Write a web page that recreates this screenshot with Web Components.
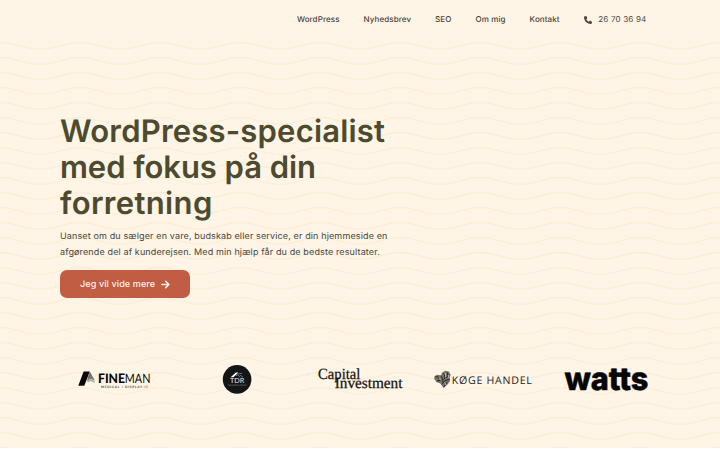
<!DOCTYPE html>
<html lang="da">
<head>
<meta charset="utf-8">
<title>WordPress-specialist</title>
<style>
    body{
        margin: 0;
        background-color: #fff;
        font-family: Inter, "Liberation Sans", sans-serif;
        color: #48443a;
        text-rendering: geometricPrecision;
    }
</style>
</head>
<body>
<landing-page>
    <site-nav slot="header">
        <nav-link>WordPress</nav-link>
        <nav-link>Nyhedsbrev</nav-link>
        <nav-link>SEO</nav-link>
        <nav-link>Om mig</nav-link>
        <nav-link>Kontakt</nav-link>
        <phone-link>26 70 36 94</phone-link>
    </site-nav>
    <hero-section>
        <span slot="title" style="letter-spacing:0.2px">WordPress-specialist</span>
        <span slot="title" style="letter-spacing:-0.05px">med fokus på din</span>
        <span slot="title" style="letter-spacing:0.35px">forretning</span>
        <span slot="text">Uanset om du sælger en vare, budskab eller service, er din hjemmeside en</span>
        <span slot="text">afgørende del af kunderejsen. Med min hjælp får du de bedste resultater.</span>
        <arrow-button slot="action">Jeg vil vide mere</arrow-button>
    </hero-section>
    <logo-row slot="footer"></logo-row>
</landing-page>

<script>
function attach(el, html){
    const template = document.createElement('template')
    template.innerHTML = html
    el.attachShadow({mode: 'open'}).appendChild(template.content.cloneNode(true))
}

class LandingPage extends HTMLElement {
    constructor(){
        super();
        attach(this, `
            <style>
                :host{
                    display: grid;
                    grid-template-rows: 38px 310px 100px;
                    width: 720px;
                    height: 448px;
                    position: relative;
                    overflow: hidden;
                    background-color: #fff5e7;
                }
                .waves{
                    position: absolute;
                    inset: 0;
                    z-index: 0;
                }
                ::slotted(*){
                    position: relative;
                }
            </style>
            <svg class="waves" width="720" height="448" fill="none" stroke="#faeed6" stroke-width="1.3"></svg>
            <slot name="header"></slot>
            <slot></slot>
            <slot name="footer"></slot>
        `)
        // one wave is 80px long, rows are 15px apart
        const rows = []
        for(let y = 42.5; y < 448; y += 15){
            let d = `M-80 ${y}`
            for(let x = -80; x < 720; x += 80){
                d += `c15 0 25 6.8 40 6.8s25-6.8 40-6.8`
            }
            rows.push(`<path d="${d}"/>`)
        }
        this.shadowRoot.querySelector('.waves').innerHTML = rows.join('')
    }
}

class SiteNav extends HTMLElement {
    constructor(){
        super();
        attach(this, `
            <style>
                :host{
                    display: flex;
                    justify-content: flex-end;
                    align-items: center;
                    gap: 24px;
                    padding-right: 73.5px;
                    font-size: 8px;
                }
            </style>
            <slot></slot>
        `)
    }
}

class NavLink extends HTMLElement {
    constructor(){
        super();
        attach(this, `
            <style>
                :host{
                    display: block;
                    font-weight: 500;
                    letter-spacing: 0.1px;
                    line-height: 12px;
                    white-space: nowrap;
                }
            </style>
            <slot></slot>
        `)
    }
}

class PhoneLink extends HTMLElement {
    constructor(){
        super();
        attach(this, `
            <style>
                :host{
                    display: flex;
                    align-items: center;
                    gap: 6px;
                    padding-left: 0.6px;
                    letter-spacing: 0.2px;
                    line-height: 12px;
                    white-space: nowrap;
                }
                svg{
                    margin-top: 1px;
                }
            </style>
            <svg width="8" height="8" viewBox="0 0 512 512" fill="#48443a"><path d="M165 25c-8-19-29-29-49-24L28 25C11 30 0 45 0 64c0 247 201 448 448 448 18 0 34-12 39-29l24-88c5-20-5-41-24-49l-96-40c-16-7-35-2-46 12l-41 49c-70-33-127-90-160-160l49-40c14-11 19-30 12-46z"/></svg>
            <slot></slot>
        `)
    }
}

class HeroSection extends HTMLElement {
    constructor(){
        super();
        attach(this, `
            <style>
                :host{
                    display: flex;
                    flex-direction: column;
                    align-items: flex-start;
                    padding: 76px 0 0 60px;
                    white-space: nowrap;
                }
                h1{
                    margin: 0;
                    font-size: 31px;
                    font-weight: 600;
                    line-height: 36px;
                    color: #4d4b2f;
                }
                p{
                    margin: 7px 0 10px;
                    font-size: 9px;
                    line-height: 15.5px;
                    letter-spacing: 0.135px;
                }
                ::slotted(span){
                    display: block;
                }
            </style>
            <h1><slot name="title"></slot></h1>
            <p><slot name="text"></slot></p>
            <slot name="action"></slot>
        `)
    }
}

class ArrowButton extends HTMLElement {
    constructor(){
        super();
        attach(this, `
            <style>
                :host{
                    display: flex;
                    align-items: center;
                    gap: 6px;
                    box-sizing: border-box;
                    width: 129.5px;
                    height: 27.5px;
                    padding: 1px 0 0 20px;
                    border-radius: 7px;
                    background-color: #c05d42;
                    color: #fff8ee;
                    font-size: 9px;
                    font-weight: 500;
                    letter-spacing: 0.12px;
                }
            </style>
            <slot></slot>
            <svg width="9" height="9" viewBox="0 0 9 9" fill="none" stroke="#fff8ee" stroke-width="1.5" stroke-linecap="round" stroke-linejoin="round"><path d="M.8 4.5h7M4.6 1.2L7.9 4.5 4.6 7.8"/></svg>
        `)
    }
}

class LogoRow extends HTMLElement {
    constructor(){
        super();
        attach(this, `
            <style>
                :host{
                    display: flex;
                    gap: 20px;
                    padding: 11px 0 0 60px;
                }
                svg{
                    width: 104px;
                    height: 40px;
                    overflow: visible;
                }
            </style>
            <svg viewBox="60 359 104 40">
                <path d="M78.3 385.7L83.6 371.5h6.2L84.3 385.7z" fill="#080808"/>
                <path d="M89.8 371.5l4.9 8.8-4.8-1.5-3 3.1 1.2-5.7z" fill="#77746f"/>
                <path d="M87.2 380.7l2.5-2.2 5 2.2v2.2l-4.2-2-2.1 1.3z" fill="#b5b0a8"/>
                <text x="98" y="382.6" font-family="Lato" font-size="13" font-weight="900" textLength="27" lengthAdjust="spacingAndGlyphs" fill="#080808">FINE</text>
                <text x="124.8" y="382.6" font-family="Lato" font-size="13" textLength="25.6" lengthAdjust="spacingAndGlyphs" fill="#080808">MAN</text>
                <text x="101" y="387.6" font-family="Lato" font-size="3.2" font-weight="700" textLength="47" fill="#37342f">MEDICAL / DISPLAY-IT</text>
            </svg>
            <svg viewBox="184 359 104 40">
                <circle cx="237.1" cy="379.4" r="14.3" fill="#141516"/>
                <path d="M230.6 377.2l5.3-4.8 2.5.2-5 4.6z" fill="#fff"/>
                <path d="M236 375.8l1.8-1.2 2 2.6M238.2 374l4-.8M240 375.2l3 2" fill="none" stroke="#9a9a9a" stroke-width=".7"/>
                <text x="230" y="383.1" font-family="Lato" font-size="7" textLength="14.2" lengthAdjust="spacingAndGlyphs" fill="#e5e5e5">TDR</text>
                <text x="227.8" y="385.9" font-family="Lato" font-size="2" textLength="18.5" fill="#858585">TRANSPORT &amp; SERVICE</text>
            </svg>
            <svg viewBox="308 359 104 40" font-family="Liberation Serif" font-size="15.5" fill="#17130f" stroke="#17130f" stroke-width=".25">
                <text x="318" y="379.4" textLength="42.4" lengthAdjust="spacingAndGlyphs">Capital</text>
                <text x="334.7" y="388" textLength="67.8" lengthAdjust="spacingAndGlyphs">Investment</text>
            </svg>
            <svg viewBox="432 359 104 40">
                <path d="M443.6 388l-3.2-4.4-4-1.5-2.2-3.3.4-2.8 3-1.2 3.4.8 1-2.8 3.4-2 3.4.6 1.8 3-.8 3.4.3 3.2-2.6 3.6z" fill="#77726b"/>
                <path d="M435.3 377.2c2-1.4 4 .2 3.4 2.2M440.6 376c2 1 2.5 4 2.2 6.2M443.2 373.3c1.7 1.3 2 4.2.9 6M447 372.4c1.6 2 .8 4.6-1 5.6M437 381l4.6-.8M441.8 384.4l3.4-4 4.2-.8M443.8 387l3.4-5" fill="none" stroke="#25221e" stroke-width="1"/>
                <path d="M439.2 377.6l1.7 3M445.4 373l.2 4M444.7 382.4l1.1 2.6M448.4 375l.4 3" fill="none" stroke="#d9d0c3" stroke-width=".7"/>
                <text x="451.8" y="383.6" font-family="Open Sans" font-size="10.6" font-weight="500" textLength="80" fill="#24201c">KØGE HANDEL</text>
            </svg>
            <svg viewBox="556 359 104 40">
                <text x="564.4" y="389.6" font-family="Inter" font-size="31.5" font-weight="800" textLength="84" lengthAdjust="spacingAndGlyphs" fill="#050505" stroke="#050505" stroke-width=".5" stroke-linejoin="round">watts</text>
            </svg>
        `)
    }
}

window.customElements.define('landing-page', LandingPage)
window.customElements.define('site-nav', SiteNav)
window.customElements.define('nav-link', NavLink)
window.customElements.define('phone-link', PhoneLink)
window.customElements.define('hero-section', HeroSection)
window.customElements.define('arrow-button', ArrowButton)
window.customElements.define('logo-row', LogoRow)
</script>
</body>
</html>
